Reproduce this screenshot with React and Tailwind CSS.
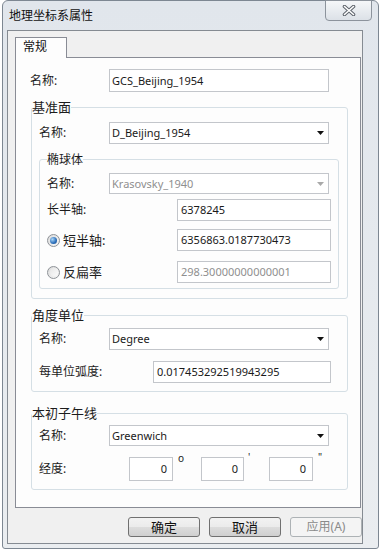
import React from "react";

function Arrow({ disabled }) {
  return (
    <svg width="7" height="4" viewBox="0 0 7 4" className="shrink-0">
      <polygon points="0,0 7,0 3.5,4" fill={disabled ? "#a9a9a9" : "#111111"} />
    </svg>
  );
}

function Select({ value, disabled, className }) {
  return (
    <div
      className={`flex items-center border border-[#c3c6cb] bg-white pl-[2px] pr-[4px] text-[11px] leading-[14px] ${
        disabled ? "text-[#8f8f8f]" : "text-[#1a1a1a]"
      } ${className}`}
    >
      <span className="flex-1">{value}</span>
      <Arrow disabled={disabled} />
    </div>
  );
}

function Box({ children, className, disabled }) {
  return (
    <div
      className={`flex items-center border border-[#c3c6cb] bg-white text-[11px] leading-[14px] ${
        disabled ? "text-[#8f8f8f]" : "text-[#1a1a1a]"
      } ${className}`}
    >
      {children}
    </div>
  );
}

function Radio({ checked }) {
  return (
    <span className="w-[13px] h-[13px] shrink-0 rounded-full border border-[#8e9297] bg-gradient-to-br from-[#dcdcdc] to-[#f7f7f7] flex items-center justify-center">
      {checked ? (
        <span className="w-[7px] h-[7px] rounded-full bg-[radial-gradient(circle_at_35%_35%,#a9d6f8,#2a6cb8_60%,#174d8f)]" />
      ) : (
        <span className="w-[8px] h-[8px] rounded-full bg-gradient-to-br from-[#e6e6e6] to-[#fbfbfb]" />
      )}
    </span>
  );
}

export default function App() {
  return (
    <div className="w-[382px] h-[554px] bg-white overflow-hidden font-['Noto_Sans','Noto_Sans_CJK_SC',sans-serif] text-[#1c1c1c]">
      <div className="ml-[2px] w-[377px] h-[549px] border border-[#7d8792] rounded-t-[6px] rounded-b-[3px] bg-gradient-to-b from-[#e1e6ec] to-[#eaedf0] pl-[4px] flex flex-col">
        {/* title bar */}
        <div className="h-[29px] shrink-0 flex items-start">
          <span className="mt-[7px] ml-[2px] text-[12px] leading-[16px] text-[#111]">地理坐标系属性</span>
          <div className="ml-auto mr-[6px] -mt-px w-[47px] h-[21px] rounded-b-[4px] border border-[#8c939c] bg-gradient-to-b from-[#f5f7f9] to-[#dce1e7] flex items-center justify-center">
            <svg width="14" height="11" viewBox="0 0 14 11">
              <path d="M2.5 1.5 L11.5 9.5 M11.5 1.5 L2.5 9.5" stroke="#5d636b" strokeWidth="3.6" strokeLinecap="round" fill="none" />
              <path d="M2.5 1.5 L11.5 9.5 M11.5 1.5 L2.5 9.5" stroke="#ffffff" strokeWidth="1.6" strokeLinecap="round" fill="none" />
            </svg>
          </div>
        </div>

        {/* client frame */}
        <div className="w-[356px] h-[514px] shrink-0 border border-[#858b92] bg-[#f0f0f0] pl-[7px] pt-[6px] flex flex-col">
          {/* tab */}
          <div className="relative z-10 -mb-px w-[52px] h-[21px] border border-b-0 border-[#898c95] bg-[#fdfdfd] pl-[7px] text-[12px] leading-[18px] text-[#111]">
            常规
          </div>
          {/* panel */}
          <div className="w-[346px] h-[451px] shrink-0 border border-[#898c95] bg-[#fdfdfd] flex flex-col">
            <div className="mt-[11px] pl-[14px] flex items-center">
              <span className="w-[79px] text-[12px] leading-[16px]">名称:</span>
              <Box className="w-[220px] h-[23px] pl-[2px]">GCS_Beijing_1954</Box>
            </div>

            {/* 基准面 */}
            <fieldset className="ml-[15px] mt-[7px] w-[317px] border border-[#d5dfe5] rounded-[3px] pb-[9px]">
              <legend className="text-[13px] leading-[17px]">基准面</legend>
              <div className="mt-[6px] ml-[7px] flex items-center">
                <span className="w-[70px] text-[12px] leading-[16px]">名称:</span>
                <Select className="w-[220px] h-[22px]" value="D_Beijing_1954" />
              </div>

              {/* 椭球体 */}
              <fieldset className="ml-[7px] mt-[7px] w-[300px] border border-[#d5dfe5] rounded-[3px] px-[7px] pb-[5px]">
                <legend className="text-[12px] leading-[17px]">椭球体</legend>
                <div className="mt-[5px] flex items-center">
                  <span className="w-[62px] text-[12px] leading-[16px]">名称:</span>
                  <Select className="w-[220px] h-[21px]" value="Krasovsky_1940" disabled />
                </div>
                <div className="mt-[5px] flex items-center">
                  <span className="w-[130px] text-[12px] leading-[16px]">长半轴:</span>
                  <Box className="w-[154px] h-[22px] pl-[3px]">6378245</Box>
                </div>
                <div className="mt-[8px] flex items-center">
                  <Radio checked />
                  <span className="ml-[3px] text-[13px] leading-[16px]">短半轴:</span>
                  <Box className="ml-auto w-[154px] h-[22px] pl-[3px]">6356863.0187730473</Box>
                </div>
                <div className="mt-[10px] flex items-center">
                  <Radio />
                  <span className="ml-[3px] text-[13px] leading-[16px]">反扁率</span>
                  <Box className="ml-auto w-[154px] h-[22px] pl-[3px]" disabled>298.30000000000001</Box>
                </div>
              </fieldset>
            </fieldset>

            {/* 角度单位 */}
            <fieldset className="ml-[15px] mt-[8px] w-[317px] border border-[#d5dfe5] rounded-[3px] pb-[8px]">
              <legend className="text-[13px] leading-[17px]">角度单位</legend>
              <div className="mt-[4px] ml-[7px] flex items-center">
                <span className="w-[70px] text-[12px] leading-[16px]">名称:</span>
                <Select className="w-[220px] h-[22px]" value="Degree" />
              </div>
              <div className="mt-[11px] ml-[7px] flex items-center">
                <span className="w-[114px] text-[12px] leading-[16px]">每单位弧度:</span>
                <Box className="w-[178px] h-[22px] pl-[3px]">0.017453292519943295</Box>
              </div>
            </fieldset>

            {/* 本初子午线 */}
            <fieldset className="ml-[15px] mt-[13px] w-[317px] border border-[#d5dfe5] rounded-[3px] pb-[8px]">
              <legend className="text-[13px] leading-[17px]">本初子午线</legend>
              <div className="mt-[3px] ml-[7px] flex items-center">
                <span className="w-[70px] text-[12px] leading-[16px]">名称:</span>
                <Select className="w-[220px] h-[21px]" value="Greenwich" />
              </div>
              <div className="mt-[11px] ml-[7px] flex items-start">
                <span className="w-[90px] self-center text-[12px] leading-[16px]">经度:</span>
                <Box className="w-[44px] h-[24px] justify-end pr-[5px]">0</Box>
                <span className="w-[28px] pl-[5px] -mt-[4px] text-[10px] leading-[10px]">o</span>
                <Box className="w-[43px] h-[24px] justify-end pr-[5px]">0</Box>
                <span className="w-[25px] pl-[4px] -mt-[5px] text-[10px] leading-[10px]">'</span>
                <Box className="w-[44px] h-[24px] justify-end pr-[6px]">0</Box>
                <span className="pl-[5px] -mt-[5px] text-[10px] leading-[10px]">"</span>
              </div>
            </fieldset>
          </div>

          {/* buttons */}
          <div className="mt-[9px] flex justify-end gap-[9px]">
            <button className="w-[72px] h-[20px] rounded-[3px] border border-[#707070] bg-[linear-gradient(#f2f2f2,#ebebeb_50%,#dddddd_50%,#cfcfcf)] text-[13px] leading-[18px] text-[#111]">
              确定
            </button>
            <button className="w-[72px] h-[20px] rounded-[3px] border border-[#707070] bg-[linear-gradient(#f2f2f2,#ebebeb_50%,#dddddd_50%,#cfcfcf)] text-[13px] leading-[18px] text-[#111]">
              取消
            </button>
            <button className="w-[72px] h-[20px] rounded-[3px] border border-[#adb2b5] bg-[#f4f4f4] text-[12px] leading-[18px] text-[#8a8a8a]">
              应用(A)
            </button>
          </div>
        </div>
      </div>
    </div>
  );
}
